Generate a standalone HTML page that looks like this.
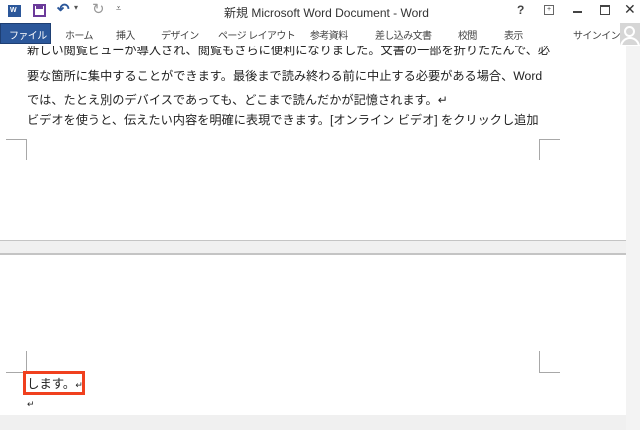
<!DOCTYPE html>
<html><head><meta charset="utf-8"><style>
*{margin:0;padding:0;box-sizing:border-box}
body{width:640px;height:430px;overflow:hidden;background:#f0f0f0;position:relative;font-family:"Liberation Sans","Noto Sans CJK JP",sans-serif;color:#222}
.a{position:absolute}
.tab{position:absolute;top:27px;font-size:10px;letter-spacing:-0.6px;color:#444;white-space:nowrap}
.ln{position:absolute;left:27px;font-size:12.2px;white-space:nowrap;color:#222}
.g{background:#a8a8a8}
</style></head><body>
<div class="a" style="left:0;top:0;width:640px;height:46px;background:#fff"></div>
<div class="a" style="left:626px;top:46px;width:14px;height:384px;background:#f3f3f3"></div>
<div class="a" style="left:8px;top:5px;width:13px;height:12px;background:#2b579a"></div>
<div class="a" style="left:10px;top:7px;font-size:7px;color:#fff;font-weight:bold">W</div>
<div class="a" style="left:33px;top:4px;width:13px;height:13px;border:2px solid #6b3a9a"></div>
<div class="a" style="left:36px;top:4px;width:7px;height:5px;background:#6b3a9a"></div>
<div class="a" style="left:57px;top:0px;font-size:15px;color:#2b579a;font-weight:bold">↶</div>
<div class="a" style="left:74px;top:3px;font-size:8px;color:#555">▾</div>
<div class="a" style="left:92px;top:0px;font-size:15px;color:#999">↻</div>
<div class="a" style="left:116px;top:3px;font-size:9px;color:#555">⩡</div>
<div class="a" style="left:224px;top:4px;font-size:12px;color:#333">新規 Microsoft Word Document - Word</div>
<div class="a" style="left:517px;top:3px;font-size:12px;font-weight:bold;color:#444">?</div>
<div class="a" style="left:544px;top:5px;width:10px;height:10px;border:1px solid #666;font-size:7px;line-height:8px;text-align:center;color:#444">+</div>
<div class="a" style="left:573px;top:11px;width:9px;height:2px;background:#444"></div>
<div class="a" style="left:600px;top:5px;width:10px;height:10px;border:1px solid #444;border-top-width:2px"></div>
<div class="a" style="left:624px;top:1px;font-size:14px;color:#333">✕</div>
<div class="a" style="left:0;top:23px;width:51px;height:21px;background:#2b579a;border:1px solid #1e3f73"></div>
<div class="tab" style="left:9px;color:#fff">ファイル</div>
<div class="tab" style="left:65px">ホーム</div>
<div class="tab" style="left:116px">挿入</div>
<div class="tab" style="left:161px">デザイン</div>
<div class="tab" style="left:218px">ページ レイアウト</div>
<div class="tab" style="left:310px">参考資料</div>
<div class="tab" style="left:375px">差し込み文書</div>
<div class="tab" style="left:458px">校閲</div>
<div class="tab" style="left:504px">表示</div>
<div class="tab" style="left:573px">サインイン</div>
<div class="a" style="left:620px;top:23px;width:20px;height:22px;background:#d6d6d6;overflow:hidden">
<div class="a" style="left:4px;top:3px;width:11px;height:11px;border-radius:50%;border:2px solid #fff"></div>
<div class="a" style="left:0px;top:14px;width:20px;height:14px;border-radius:10px 10px 0 0;border:2px solid #fff"></div></div>
<div class="a" style="left:0;top:46px;width:626px;height:194px;background:#fff;overflow:hidden">
<div class="ln" style="top:-6px">新しい閲覧ビューが導入され、閲覧もさらに便利になりました。文書の一部を折りたたんで、必</div>
<div class="ln" style="top:20px">要な箇所に集中することができます。最後まで読み終わる前に中止する必要がある場合、Word</div>
<div class="ln" style="top:44px">では、たとえ別のデバイスであっても、どこまで読んだかが記憶されます。↵</div>
<div class="ln" style="top:64px">ビデオを使うと、伝えたい内容を明確に表現できます。[オンライン ビデオ] をクリックし追加</div>
</div>
<div class="a g" style="left:6px;top:139px;width:21px;height:1px"></div>
<div class="a g" style="left:26px;top:139px;width:1px;height:21px"></div>
<div class="a g" style="left:539px;top:139px;width:21px;height:1px"></div>
<div class="a g" style="left:539px;top:139px;width:1px;height:21px"></div>
<div class="a" style="left:0;top:240px;width:626px;height:1px;background:#c4c4c4"></div>
<div class="a" style="left:0;top:253px;width:626px;height:2px;background:#c4c4c4"></div>
<div class="a" style="left:0;top:255px;width:626px;height:160px;background:#fff"></div>
<div class="a g" style="left:26px;top:351px;width:1px;height:21px"></div>
<div class="a g" style="left:6px;top:372px;width:21px;height:1px"></div>
<div class="a g" style="left:539px;top:351px;width:1px;height:21px"></div>
<div class="a g" style="left:539px;top:372px;width:21px;height:1px"></div>
<div class="a" style="left:23px;top:371px;width:62px;height:24px;border:3px solid #f0401e"></div>
<div class="a" style="left:27px;top:374px;font-size:12.4px;white-space:nowrap">します。<span style="font-size:9px">↵</span></div>
<div class="a" style="left:27px;top:399px;font-size:9px">↵</div>
</body></html>
